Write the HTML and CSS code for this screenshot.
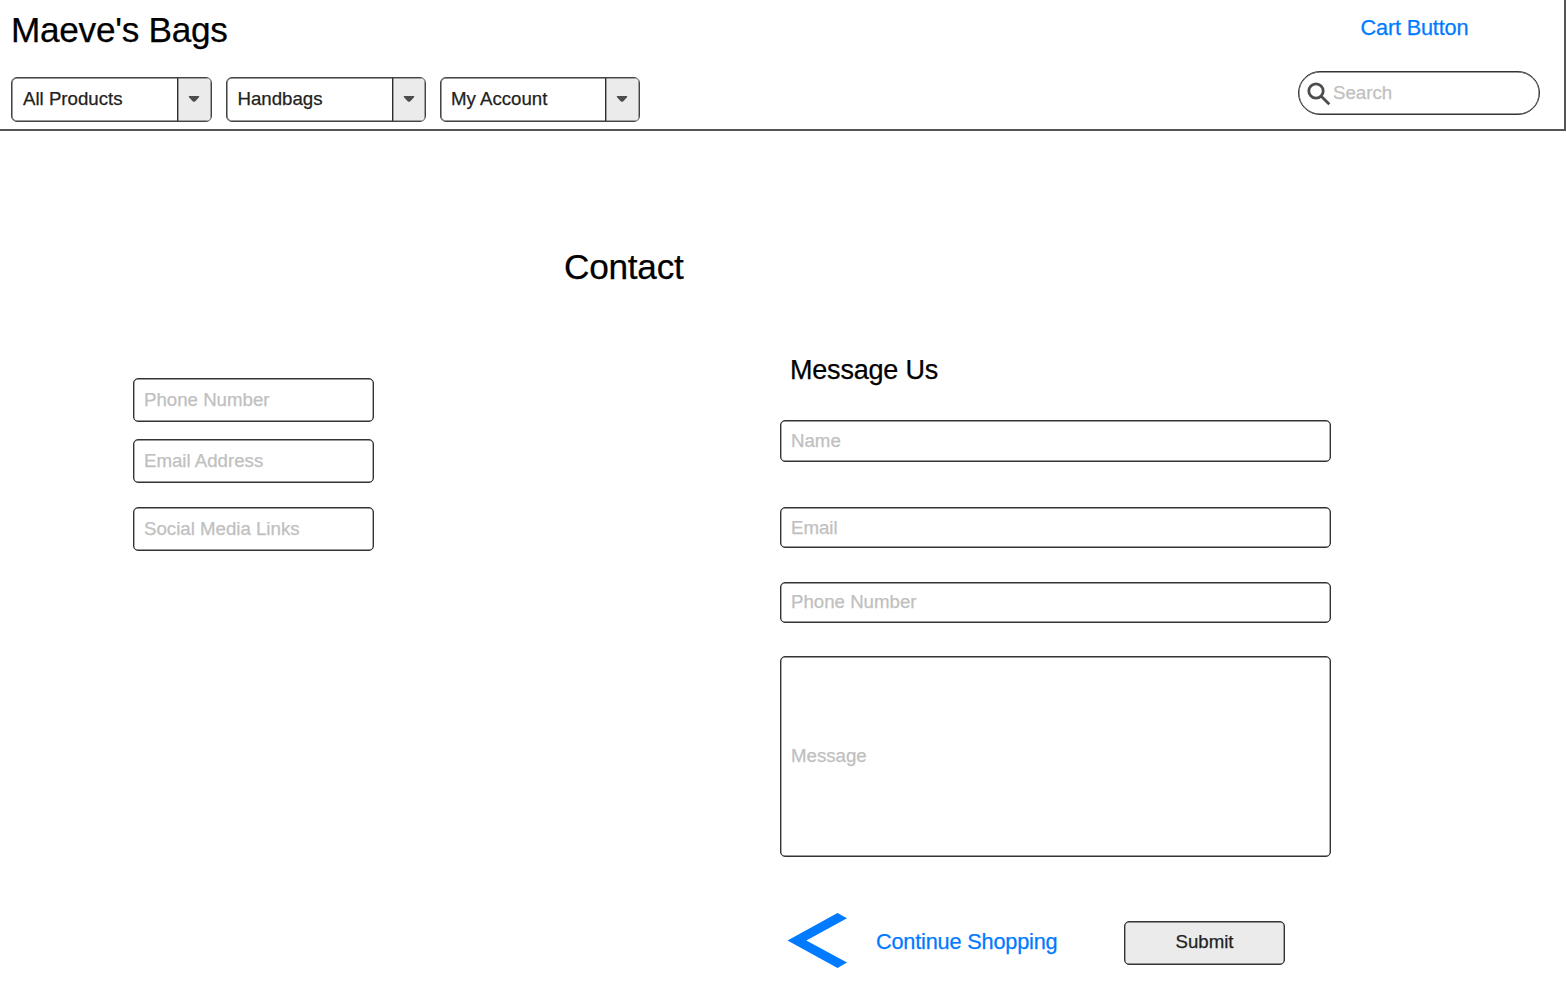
FILE: index.html
```
<!DOCTYPE html>
<html lang="en">
<head>
<meta charset="utf-8">
<title>Maeve's Bags</title>
<link rel="stylesheet" href="styles.css">
</head>
<body>
<header class="header">
  <div class="header-left">
    <h1 class="brand">Maeve's Bags</h1>
    <nav class="nav">
      <div class="select"><span class="select-label">All Products</span><span class="select-toggle"><svg class="caret" viewBox="0 0 12 8"><path d="M1.2 1H10.8Q11.8 1.300 11 2.200L7.600 6.100Q6 7.700 4.400 6.100L1 2.200Q.2 1.300 1.200 1Z"/></svg></span></div>
      <div class="select select-second"><span class="select-label">Handbags</span><span class="select-toggle"><svg class="caret" viewBox="0 0 12 8"><path d="M1.2 1H10.8Q11.8 1.300 11 2.200L7.600 6.100Q6 7.700 4.400 6.100L1 2.200Q.2 1.300 1.200 1Z"/></svg></span></div>
      <div class="select select-third"><span class="select-label">My Account</span><span class="select-toggle"><svg class="caret" viewBox="0 0 12 8"><path d="M1.2 1H10.8Q11.8 1.300 11 2.200L7.600 6.100Q6 7.700 4.400 6.100L1 2.200Q.2 1.300 1.200 1Z"/></svg></span></div>
    </nav>
  </div>
  <div class="header-right">
    <a class="link cart">Cart Button</a>
    <div class="search">
      <svg class="search-icon" viewBox="0 0 24 24"><circle cx="9" cy="9" r="7.200"/><path d="M14.200 14.200L22.300 22.300"/></svg>
      <span class="search-text">Search</span>
    </div>
  </div>
</header>
<main class="main">
  <h2 class="title">Contact</h2>
  <div class="columns">
    <section class="details">
      <div class="field">Phone Number</div>
      <div class="field">Email Address</div>
      <div class="field field-social">Social Media Links</div>
    </section>
    <section class="form">
      <h3 class="subtitle">Message Us</h3>
      <div class="field field-wide field-name">Name</div>
      <div class="field field-wide field-email">Email</div>
      <div class="field field-wide field-phone">Phone Number</div>
      <div class="field field-wide field-message">Message</div>
      <div class="actions">
        <svg class="back" viewBox="0 0 60 56"><path d="M.5 27.600L50.500 0L60 5.300L19.300 27.600L60 49.600L50.500 55Z"/></svg>
        <a class="link continue">Continue Shopping</a>
        <div class="submit">Submit</div>
      </div>
    </section>
  </div>
</main>
</body>
</html>
```
FILE: styles.css
```
* { box-sizing: border-box; }
body {
  margin: 0;
  width: 1566px;
  height: 998px;
  overflow: hidden;
  background: #fff;
  color: #000;
  font-family: "Liberation Sans", Arial, sans-serif;
  font-size: 18.67px;
  -webkit-text-stroke: .25px;
}
h1, h2, h3 { margin: 0; font-weight: 400; white-space: nowrap; }
.header {
  display: flex;
  justify-content: space-between;
  width: 1566px;
  height: 131px;
  border-right: 1px solid #555;
  border-bottom: 1px solid #555;
  box-shadow: inset -1px -1px 0 #555;
}
.header-left { padding: 10px 0 0 11px; }
.brand { height: 67px; font-size: 35.2px; line-height: 40px; letter-spacing: -.28px; }
.nav { display: flex; }
.select {
  display: flex;
  width: 201px;
  height: 45px;
  margin-right: 14px;
  border: 1px solid #444;
  border-radius: 6px;
  box-shadow: inset 0 0 0 .5px #333;
  overflow: hidden;
}
.select-second { width: 200px; }
.select-third { width: 200px; }
.select-label { flex: none; width: 165px; padding-left: 11px; line-height: 42px; color: #222; }
.select-second .select-label { padding-left: 10.500px; }
.select-third .select-label { width: 164px; padding-left: 10px; }
.select-toggle {
  display: flex;
  align-items: center;
  justify-content: center;
  flex: 1;
  background: #ebebeb;
  border-left: 1px solid #282c33;
  box-shadow: inset 0 0 0 .5px #555;
}
.caret { width: 12px; height: 8px; margin: -2px 1px 0 0; fill: #4c4c4c; }
.header-right { width: 267px; }
.link { color: #007aff; font-size: 21.7px; letter-spacing: -.18px; white-space: nowrap; }
.cart { display: block; height: 71px; padding: 15px 0 0 62.600px; line-height: 26px; }
.search {
  display: flex;
  width: 242px;
  height: 44px;
  border: 1px solid #333;
  border-radius: 22px;
  box-shadow: inset 0 0 0 .4px #333;
}
.search-icon { width: 24px; height: 24px; margin: 10px 0 0 8px; fill: none; stroke: #4c4c4c; stroke-width: 2.800; }
.search-text { padding-left: 2px; line-height: 42px; color: #c0c0c0; }
.title { height: 247px; padding: 116px 0 0 564px; font-size: 35.2px; line-height: 40px; letter-spacing: -.25px; }
.columns { display: flex; }
.details { flex: none; width: 780px; padding-left: 133px; }
.field {
  display: flex;
  align-items: center;
  width: 241px;
  height: 44px;
  margin-bottom: 17px;
  padding: 0 0 0 10px;
  border: 1px solid #333;
  border-radius: 5px;
  box-shadow: inset 0 0 0 .4px #333;
  color: #c0c0c0;
}
.field-social { margin-top: 24px; }
.form { flex: none; width: 551px; }
.subtitle { padding-left: 10px; margin-top: -23px; height: 65px; font-size: 27px; line-height: 30px; letter-spacing: -.2px; }
.field-wide { width: 551px; height: 42px; }
.field-name { margin-bottom: 45px; }
.field-email { height: 41px; margin-bottom: 34px; }
.field-phone { height: 41px; margin-bottom: 33px; padding-bottom: 1px; }
.field-message { height: 201px; margin-bottom: 56px; padding-bottom: 1px; }
.actions { display: flex; }
.back { width: 60px; height: 56px; margin-left: 7px; fill: #007aff; }
.continue { width: 248px; margin-left: 29px; line-height: 58px; }
.submit {
  flex: none;
  width: 161px;
  height: 44px;
  margin-top: 8px;
  border: 1px solid #333;
  border-radius: 5px;
  box-shadow: inset 0 0 0 .4px #333;
  background: #ebebeb;
  color: #222;
  line-height: 40px;
  text-align: center;
}
```
